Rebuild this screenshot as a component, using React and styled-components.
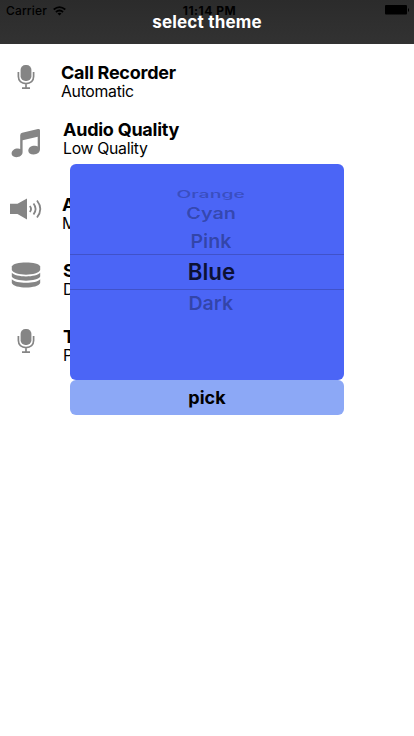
import React from "react";
import styled, { createGlobalStyle } from "styled-components";

const GlobalStyle = createGlobalStyle`
  * { box-sizing: border-box; }
  body { margin: 0; background: #fff; }
`;

const Screen = styled.div`
  position: relative;
  width: 414px;
  height: 736px;
  overflow: hidden;
  background: #fff;
  color: #000;
  font-family: Inter, "Liberation Sans", sans-serif;
`;

const Header = styled.header`
  height: 44px;
  background: linear-gradient(#2b2b2b, #323232);
`;

const StatusBar = styled.div`
  display: grid;
  grid-template-columns: 1fr auto 1fr;
  align-items: center;
  height: 20px;
  padding: 0 6px;
  font-size: 12px;
  line-height: 20px;
`;

const Carrier = styled.div`
  display: flex;
  align-items: center;
  gap: 6px;
  font-weight: 500;
  letter-spacing: 0.15px;
`;

const Clock = styled.div`
  padding: 1px 0 0 5px;
  font-weight: 700;
  letter-spacing: 0.5px;
`;

const Battery = styled.svg`
  justify-self: end;
  margin: -1px -1px 0 0;
`;

const HeaderTitle = styled.h1`
  position: relative;
  margin: -8px 0 0;
  font-size: 17px;
  line-height: 20px;
  font-weight: 700;
  letter-spacing: 0.2px;
  text-align: center;
  color: #fff;
`;

const SettingsList = styled.main`
  display: flex;
  flex-direction: column;
`;

const SettingRow = styled.div`
  display: flex;
  height: 66px;
`;

const IconSlot = styled.div`
  display: flex;
  align-items: center;
  justify-content: center;
  width: 52px;
  flex: none;
  color: #858585;
`;

const Labels = styled.div`
  padding: ${(p) => p.$top}px 0 0 ${(p) => p.$left}px;
  white-space: nowrap;
`;

const Title = styled.div`
  font-size: 18px;
  line-height: 19px;
  font-weight: 700;
  letter-spacing: -0.25px;
`;

const Value = styled.div`
  font-size: 15.8px;
  line-height: 19px;
  letter-spacing: -0.3px;
`;

const PickerDialog = styled.section`
  position: absolute;
  left: 70px;
  top: 164px;
  width: 274px;
`;

const Wheel = styled.div`
  height: 216px;
  padding-top: 25px;
  border-radius: 6px;
  background: #4b65f6;
`;

const Option = styled.div`
  display: flex;
  align-items: center;
  justify-content: center;
  height: ${(p) => p.$height}px;
  padding-left: ${(p) => p.$shift || 0}px;
  font-size: 20px;
  font-weight: 600;
  color: rgba(0, 0, 0, ${(p) => p.$alpha});

  span { transform: scale(${(p) => p.$sx}, ${(p) => p.$sy}); }
`;

const SelectedOption = styled(Option)`
  border-top: 1px solid #4052c9;
  border-bottom: 1px solid #4052c9;
  font-size: 23px;
  color: #0c1134;
`;

const PickButton = styled.button`
  display: block;
  width: 100%;
  height: 35px;
  padding: 0;
  border: 0;
  border-radius: 6px;
  background: #8ca8f6;
  color: #000;
  font: 700 18px/35px Inter, sans-serif;
`;

const MicIcon = () => (
  <svg width="18" height="26" viewBox="0 0 18 26">
    <rect x="3.6" y="1" width="10.8" height="16" rx="4.8" fill="currentColor" />
    <path d="M1.4 8v4.6c0 4.2 3 7 7.6 7s7.6-2.8 7.6-7V8M9 20v4M5 24.2h8" fill="none" stroke="currentColor" strokeWidth="1.7" />
  </svg>
);

const MusicIcon = () => (
  <svg width="30" height="30" viewBox="0 0 30 30">
    <path d="M9.2 7.2Q9.3 5.3 11.2 4.8L27 1.1Q29 .8 29 2.5V21C29 24.3 26.4 26.4 22.7 26.4 19.3 26.4 17.3 24.8 17.3 22.7 17.3 19.5 20.3 17.5 24 17.7Q25.7 17.8 26.7 18.4V8.8L11.6 12.2V24C11.6 27.2 8.8 29.2 5.2 29.2 2.2 29.2.6 27.7.6 25.6.6 22.3 3.5 20.3 7 20.4Q8.4 20.5 9.2 21Z" fill="currentColor" />
  </svg>
);

const SpeakerIcon = () => (
  <svg width="32" height="22" viewBox="0 0 32 22">
    <path d="M0 5.8h7.5L17 .5v21L7.5 16H0Z" fill="currentColor" />
    <path d="M19.8 8q2.5 3 0 6M23.5 5.5q4.2 5.5 0 11M27 2.5q6.6 8.5 0 17" fill="none" stroke="currentColor" strokeWidth="1.8" />
  </svg>
);

const DiscsIcon = () => (
  <svg width="30" height="28" viewBox="0 0 30 28">
    <g fill="currentColor">
      <path d="M.8 5.5C2 0 28 0 29.2 5.5V9C27 15.2 3 15.2.8 9Z" />
      <path d="M.8 11.8C4.5 16.6 25.5 16.6 29.2 11.8V15.6C27 21 3 21 .8 15.6Z" />
      <path d="M.8 18.3C4.5 23 25.5 23 29.2 18.3V22C27 28 3 28 .8 22Z" />
    </g>
  </svg>
);

const SETTINGS = [
  { Icon: MicIcon, title: "Call Recorder", value: "Automatic", top: 19, left: 9 },
  { Icon: MusicIcon, title: "Audio Quality", value: "Low Quality", top: 10, left: 11 },
  { Icon: SpeakerIcon, title: "Audio Source", value: "Microphone", top: 19, left: 10 },
  { Icon: DiscsIcon, title: "Storage", value: "Device", top: 19, left: 11 },
  { Icon: MicIcon, title: "Theme", value: "Pink", top: 19, left: 11 },
];

export default function App() {
  return (
    <Screen>
      <GlobalStyle />
      <Header>
        <StatusBar>
          <Carrier>
            Carrier
            <svg width="13" height="10" viewBox="0 0 13 10" fill="none" stroke="#000" strokeWidth="1.7">
              <path d="M.7 3.5q5.8-4.8 11.6 0M2.9 6q3.6-3 7.2 0" />
              <path d="M4.5 7.6q2-1.5 4 0l-2 2Z" fill="#000" stroke="none" />
            </svg>
          </Carrier>
          <Clock>11:14 PM</Clock>
          <Battery width="25" height="10" viewBox="0 0 25 10">
            <rect x="1" width="22" height="9.5" rx="1" />
            <rect x="24" y="3.5" width="1" height="3" />
          </Battery>
        </StatusBar>
        <HeaderTitle>select theme</HeaderTitle>
      </Header>
      <SettingsList>
        {SETTINGS.map(({ Icon, title, value, top, left }) => (
          <SettingRow key={title}>
            <IconSlot><Icon /></IconSlot>
            <Labels $top={top} $left={left}>
              <Title>{title}</Title>
              <Value>{value}</Value>
            </Labels>
          </SettingRow>
        ))}
      </SettingsList>
      <PickerDialog>
        <Wheel>
          <Option $height={12} $shift={8} $alpha={0.22} $sx={0.96} $sy={0.48}><span>Orange</span></Option>
          <Option $height={26} $shift={8} $alpha={0.3} $sx={0.99} $sy={0.78}><span>Cyan</span></Option>
          <Option $height={27} $shift={8} $alpha={0.33} $sx={0.98} $sy={0.95}><span>Pink</span></Option>
          <SelectedOption $height={36} $shift={8} $alpha={1} $sx={0.97} $sy={1}><span>Blue</span></SelectedOption>
          <Option $height={26} $shift={8} $alpha={0.33} $sx={0.98} $sy={0.94}><span>Dark</span></Option>
        </Wheel>
        <PickButton>pick</PickButton>
      </PickerDialog>
    </Screen>
  );
}
